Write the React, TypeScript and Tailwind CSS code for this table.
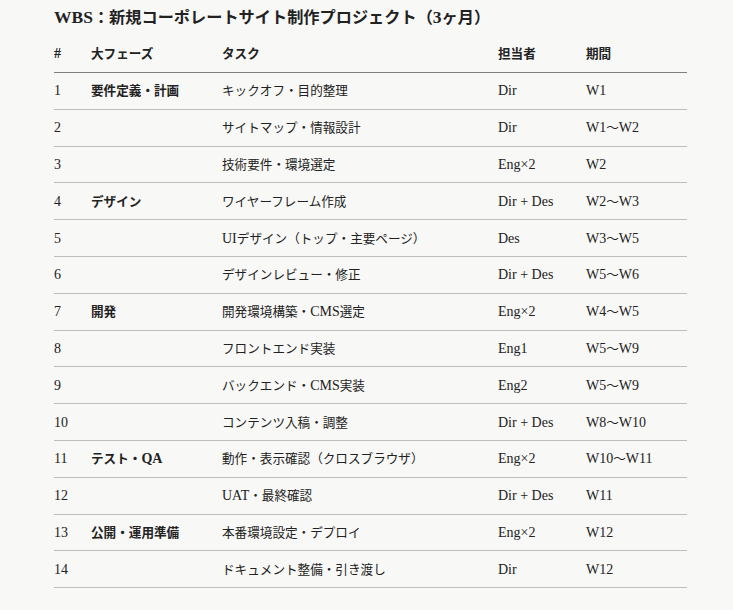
const rows: [string, string, string, string, string][] = [
  ["1", "要件定義・計画", "キックオフ・目的整理", "Dir", "W1"],
  ["2", "", "サイトマップ・情報設計", "Dir", "W1〜W2"],
  ["3", "", "技術要件・環境選定", "Eng×2", "W2"],
  ["4", "デザイン", "ワイヤーフレーム作成", "Dir + Des", "W2〜W3"],
  ["5", "", "UIデザイン（トップ・主要ページ）", "Des", "W3〜W5"],
  ["6", "", "デザインレビュー・修正", "Dir + Des", "W5〜W6"],
  ["7", "開発", "開発環境構築・CMS選定", "Eng×2", "W4〜W5"],
  ["8", "", "フロントエンド実装", "Eng1", "W5〜W9"],
  ["9", "", "バックエンド・CMS実装", "Eng2", "W5〜W9"],
  ["10", "", "コンテンツ入稿・調整", "Dir + Des", "W8〜W10"],
  ["11", "テスト・QA", "動作・表示確認（クロスブラウザ）", "Eng×2", "W10〜W11"],
  ["12", "", "UAT・最終確認", "Dir + Des", "W11"],
  ["13", "公開・運用準備", "本番環境設定・デプロイ", "Eng×2", "W12"],
  ["14", "", "ドキュメント整備・引き渡し", "Dir", "W12"],
];

const cols = "grid grid-cols-[37px_131px_276px_88px_101px]";

function T({ s, big = false }: { s: string; big?: boolean }) {
  const parts = s.match(/[\x20-\x7e×]+|[^\x20-\x7e×]+/g) || [];
  return (
    <>
      {parts.map((p, i) =>
        /^[\x20-\x7e×]+$/.test(p) ? (
          <span key={i} className={big ? "text-[17.5px]" : "text-[14px]"}>
            {p}
          </span>
        ) : (
          <span key={i}>{p}</span>
        )
      )}
    </>
  );
}

export default function App() {
  return (
    <div
      className="min-h-[610px] w-[733px] bg-[#f8f8f6] pl-[54px] pt-[5px] text-[#222]"
      style={{ fontFamily: '"Liberation Serif", "Noto Sans CJK JP", serif' }}
    >
      <h1 className="h-[24px] text-[16.2px] font-bold leading-[24px]">
        <T s="WBS：新規コーポレートサイト制作プロジェクト（3ヶ月）" big />
      </h1>
      <div className="mt-[8px] w-[633px] text-[12.6px] leading-[20px]">
        <div className={`${cols} h-[36px] items-center border-b border-[#808080] pb-[1px] font-bold`}>
          <div><T s="#" /></div>
          <div>大フェーズ</div>
          <div>タスク</div>
          <div>担当者</div>
          <div>期間</div>
        </div>
        {rows.map((r) => (
          <div
            key={r[0]}
            className={`${cols} h-[36.8px] items-center border-b border-[#bdbdbd] pt-[1px]`}
          >
            <div><T s={r[0]} /></div>
            <div className="font-bold"><T s={r[1]} /></div>
            <div><T s={r[2]} /></div>
            <div><T s={r[3]} /></div>
            <div><T s={r[4]} /></div>
          </div>
        ))}
      </div>
    </div>
  );
}
